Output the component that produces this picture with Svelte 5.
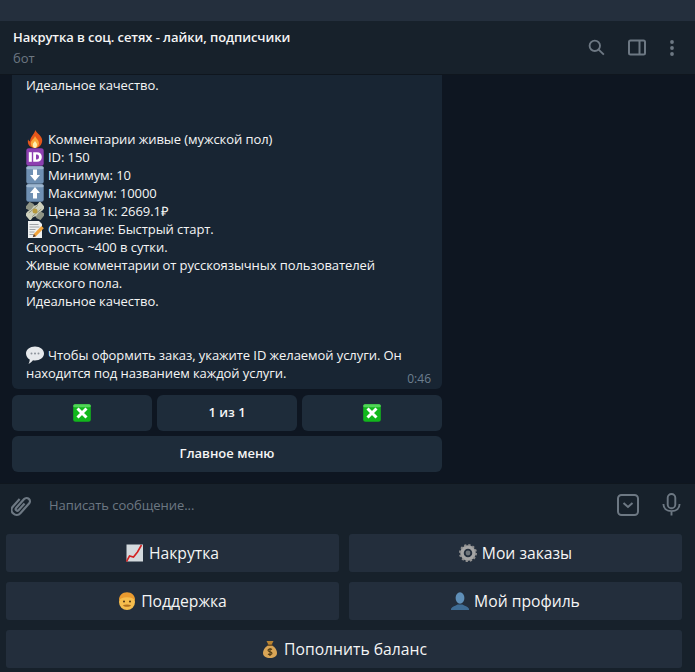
<script>
  const lines1 = [
    { e: 'fire', t: 'Комментарии живые (мужской пол)' },
    { e: 'id', t: 'ID: 150' },
    { e: 'down', t: 'Минимум: 10' },
    { e: 'up', t: 'Максимум: 10000' },
    { e: 'money', t: 'Цена за 1к: 2669.1₽' },
    { e: 'memo', t: 'Описание: Быстрый старт.' },
    { t: 'Скорость ~400 в сутки.' },
    { t: 'Живые комментарии от русскоязычных пользователей' },
    { t: 'мужского пола.' },
    { t: 'Идеальное качество.' }
  ];
  const keys = [
    { e: 'chart', t: 'Накрутка' },
    { e: 'gear', t: 'Мои заказы' },
    { e: 'man', t: 'Поддержка' },
    { e: 'user', t: 'Мой профиль' },
    { e: 'bag', t: 'Пополнить баланс', wide: true }
  ];
</script>

{#snippet emoji(n)}
  <svg class="emoji" viewBox="0 0 18 18" aria-hidden="true">
    {#if n === 'fire'}
      <path d="M9.500 0c.6 3 5.300 4.800 6.500 9 1 3.800-1.800 9-7 9S1 14 2 9.500c.5 1 1.200 1.700 2.200 2C3.800 7.500 8 4.500 9.500 0z" fill="#e4561b"/>
      <path d="M9 6c.8 2.300 4 3.800 4 7.300 0 2.600-1.800 4.700-4 4.700s-4.200-2-4.200-4.500C4.800 10.300 8.300 8.800 9 6z" fill="#fba93a"/>
      <path d="M9 11c.5 1.200 2 2 2 3.700 0 1.800-.9 3.300-2 3.300s-2.200-1.500-2.200-3.300C6.800 13 8.500 12.200 9 11z" fill="#fff0b0"/>
    {:else if n === 'id'}
      <rect x=".3" y=".3" width="17.400" height="17.400" rx="2.500" fill="#8d3fb0"/>
      <rect x="2.800" y="4.200" width="3" height="9.600" fill="#fff"/>
      <path d="M7.200 4.200h3.800c3 0 4.800 1.900 4.800 4.800s-1.800 4.800-4.800 4.800H7.200zm2.800 2.400v4.800h1c1.300 0 2-.9 2-2.400s-.7-2.400-2-2.400z" fill="#fff"/>
    {:else if n === 'down'}
      <rect x=".3" y=".3" width="17.400" height="17.400" rx="2.500" fill="#6f90b3"/>
      <rect x=".3" y=".3" width="17.400" height="3" rx="1.500" fill="#9db6cf"/>
      <path d="M7 3.500h4v5.500h3l-5 6-5-6h3z" fill="#fff"/>
    {:else if n === 'up'}
      <rect x=".3" y=".3" width="17.400" height="17.400" rx="2.500" fill="#6f90b3"/>
      <rect x=".3" y=".3" width="17.400" height="3" rx="1.500" fill="#9db6cf"/>
      <path d="M7 14.500h4V9h3L9 3 4 9h3z" fill="#fff"/>
    {:else if n === 'money'}
      <g transform="rotate(40 9 9)">
        <path d="M-1 5.500l4-1 4 1 4-1 4 1 4-1v8l-4 1-4-1-4 1-4-1-4 1z" fill="#8f9484"/>
      </g>
      <g transform="rotate(-40 9 9)">
        <path d="M-1 5.500l4-1 4 1 4-1 4 1 4-1v8l-4 1-4-1-4 1-4-1-4 1z" fill="#cdd0bd"/>
        <path d="M3 6.500h12M3 11.500h12" stroke="#8b8f78" stroke-width=".8"/>
      </g>
      <circle cx="9" cy="9" r="2.500" fill="#b79a3d"/>
    {:else if n === 'memo'}
      <path d="M2 1h11l3 3v14H2z" fill="#eef0f0"/>
      <path d="M3.500 4.500h9M3.500 7h10M3.500 9.500h6M3.500 12h5M3.500 14.500h4" stroke="#8b9196" stroke-width=".8"/>
      <path d="M15.500 6l2.300 2.200-7.800 8-3.200 1 1-3.300z" fill="#f2a33a"/>
      <path d="M6.800 17.200l1-3.300 2.200 2.300z" fill="#5d4037"/>
    {:else if n === 'speech'}
      <path d="M9 .5c5 0 9 2.900 9 7s-4 7-9 7c-.7 0-1.400 0-2-.2-1 1.500-2.700 2.900-4.600 3.500.8-1 1.300-2.600 1.300-4.300C1.500 12.300 0 10.100 0 7.500 0 3.400 4 .5 9 .5z" fill="#e6e9ec"/>
      <circle cx="5.500" cy="7.500" r="1" fill="#8b9299"/>
      <circle cx="9" cy="7.500" r="1" fill="#8b9299"/>
      <circle cx="12.500" cy="7.500" r="1" fill="#8b9299"/>
    {:else if n === 'x'}
      <rect x=".2" y=".2" width="17.600" height="17.600" rx="2.500" fill="#12b71c"/>
      <rect x=".2" y=".2" width="17.600" height="3" rx="1.500" fill="#52d458"/>
      <path d="M4.500 4.500l9 9M13.500 4.500l-9 9" stroke="#fff" stroke-width="3"/>
    {:else if n === 'chart'}
      <rect x=".5" y=".5" width="16.500" height="17" fill="#d4dade"/>
      <path d="M.5 17.500l3-5.500 4 1 4-5L15.500 1" fill="none" stroke="#d22222" stroke-width="1.600"/>
    {:else if n === 'gear'}
      <circle cx="9" cy="9" r="6" fill="none" stroke="#a5a5a5" stroke-width="3.500"/>
      <circle cx="9" cy="9" r="8" fill="none" stroke="#919191" stroke-width="2" stroke-dasharray="2.200 2"/>
      <circle cx="9" cy="9" r="2.400" fill="#6f767c"/>
    {:else if n === 'man'}
      <ellipse cx="9" cy="10" rx="8" ry="8" fill="#f6bd4d"/>
      <path d="M1 9C.5 3 4.500.2 9 .2S17.500 3 17 9c-1-2.500-3.500-3.700-8-3.700S2 6.500 1 9z" fill="#e99a2f"/>
      <circle cx="6" cy="9.500" r="1" fill="#4a3015"/>
      <circle cx="12" cy="9.500" r="1" fill="#4a3015"/>
      <path d="M5 13.200c2.300-1 5.700-1 8 0-1 2-7 2-8 0z" fill="#b0701f"/>
    {:else if n === 'user'}
      <ellipse cx="9" cy="6" rx="4.400" ry="5.800" fill="#5f8fb8"/>
      <path d="M-.5 18c.5-3 4.500-4 7-5.500h5c2.500 1.500 6.500 2.500 7 5.500z" fill="#3f6c94"/>
    {:else if n === 'bag'}
      <path d="M5.500 1l7 0-2 4h-3z" fill="#b98331"/>
      <path d="M7 5.500h4c3.500 1.500 5 5 5 7.500 0 3.200-3 5-7 5s-7-1.800-7-5c0-2.500 1.500-6 5-7.500z" fill="#d9a556"/>
      <rect x="6.500" y="4.500" width="5" height="1.300" fill="#77501c"/>
      <path d="M11 9.500c-1-.9-4-.9-4 .8 0 1.900 4 1 4 2.900 0 1.700-3 1.700-4 .8M9 8v8" fill="none" stroke="#4f3a14" stroke-width="1.100"/>
    {/if}
  </svg>
{/snippet}

{#snippet line(l)}
  <div class="line">
    {#if l.e}{@render emoji(l.e)}{/if}<span>{l.t}</span>
  </div>
{/snippet}

<div class="app">
  <div class="topbar"></div>

  <header class="head">
    <div class="titles">
      <div class="title">Накрутка в соц. сетях - лайки, подписчики</div>
      <div class="sub">бот</div>
    </div>
    <div class="head-icons">
      <svg class="i-search" viewBox="0 0 18 18" aria-hidden="true">
        <circle cx="7.200" cy="7.200" r="5.500" />
        <path d="M11.300 11.300l5.500 5.300" />
      </svg>
      <svg class="i-panel" viewBox="0 0 18 18" aria-hidden="true">
        <rect x="1" y="1.500" width="16" height="14" rx="1.500" />
        <path d="M11.500 1.500v14" />
      </svg>
      <svg class="i-more" viewBox="0 0 4 16" aria-hidden="true">
        <circle cx="2" cy="2" r="1.900" />
        <circle cx="2" cy="8" r="1.900" />
        <circle cx="2" cy="14" r="1.900" />
      </svg>
    </div>
  </header>

  <main class="chat">
    <article class="bubble">
      <div class="line">Идеальное качество.</div>
      <div class="blank"></div>
      {#each lines1 as l}
        {@render line(l)}
      {/each}
      <div class="blank"></div>
      <div class="line">{@render emoji('speech')}<span>Чтобы оформить заказ, укажите ID желаемой услуги. Он</span></div>
      <div class="line">находится под названием каждой услуги.</div>
      <time class="time">0:46</time>
    </article>
    <div class="inline-row">
      <button class="ibtn">{@render emoji('x')}</button>
      <button class="ibtn"><span>1 из 1</span></button>
      <button class="ibtn">{@render emoji('x')}</button>
    </div>
    <div class="inline-row">
      <button class="ibtn"><span>Главное меню</span></button>
    </div>
  </main>

  <section class="composer">
    <svg class="i-clip" viewBox="0 0 20 22" aria-hidden="true">
      <g transform="rotate(42 10 11)">
        <path d="M5 7.500v10a5 5 0 0 0 10 0V4.500a3.300 3.300 0 0 0-6.600 0v12a1.600 1.600 0 0 0 3.200 0V7.500"/>
      </g>
    </svg>
    <div class="placeholder">Написать сообщение...</div>
    <svg class="i-cmd" viewBox="0 0 22 22" aria-hidden="true">
      <rect x="1" y="1" width="20" height="20" rx="3.500" />
      <path d="M6.500 9l4.500 4 4.500-4" />
    </svg>
    <svg class="i-mic" viewBox="0 0 20 24" aria-hidden="true">
      <rect x="6" y="1" width="8" height="15" rx="4" />
      <path d="M1.500 11.500c0 4.600 3.600 7.500 8.500 7.500s8.500-2.900 8.500-7.500M10 19v4.500" />
    </svg>
  </section>

  <nav class="keyboard">
    {#each keys as k}
      <button class="kbtn" class:wide={k.wide}>{@render emoji(k.e)}<span>{k.t}</span></button>
    {/each}
  </nav>
</div>

<style>
  :global(body) {
    margin: 0;
    background: #0e1621;
  }
  .app {
    width: 695px;
    height: 672px;
    display: flex;
    flex-direction: column;
    overflow: hidden;
    background: #0e1621;
    font-family: "Open Sans", sans-serif;
    font-size: 13px;
    color: #f5f5f5;
  }
  .topbar {
    height: 21px;
    flex: none;
    background: #242f3d;
  }
  .head {
    height: 54px;
    flex: none;
    display: flex;
    align-items: center;
    justify-content: space-between;
    padding: 0 21px 0 13px;
    box-sizing: border-box;
    background: #17212b;
    border-bottom: 1px solid #0f161e;
  }
  .title {
    font-weight: 600;
    line-height: 18px;
    letter-spacing: -0.075px;
    color: #f5f5f5;
  }
  .sub {
    margin-top: 3px;
    line-height: 18px;
    color: #6d7883;
  }
  .head-icons {
    display: flex;
    align-items: center;
    gap: 23px;
  }
  .head-icons svg,
  .composer svg {
    fill: none;
    stroke: #6d7883;
    stroke-width: 2;
    display: block;
  }
  .i-search { width: 17px; height: 17px; }
  .i-panel { width: 18px; height: 18px; }
  .head-icons .i-more {
    width: 4px;
    height: 16px;
    margin-left: 1px;
    fill: #6d7883;
    stroke: none;
  }
  .chat {
    height: 408px;
    flex: none;
    box-sizing: border-box;
    padding: 0 253px 0 12px;
    display: flex;
    flex-direction: column;
    gap: 5px;
    overflow: hidden;
  }
  .bubble {
    position: relative;
    flex: none;
    height: 314px;
    box-sizing: border-box;
    padding: 1px 14px 0;
    background: #182533;
    border-radius: 0 0 6px 6px;
    margin-bottom: 1px;
    letter-spacing: -0.07px;
  }
  .line {
    display: flex;
    align-items: center;
    height: 18px;
    line-height: 18px;
    white-space: nowrap;
  }
  .blank { height: 36px; }
  .emoji {
    width: 18px;
    height: 18px;
    flex: none;
    display: block;
  }
  .line .emoji { margin-right: 4px; }
  .time {
    position: absolute;
    right: 11px;
    bottom: 2px;
    font-size: 12px;
    line-height: 16px;
    letter-spacing: 0;
    color: #6d7f8f;
  }
  .inline-row {
    display: flex;
    gap: 5px;
    flex: none;
  }
  button {
    font-family: inherit;
    border: 0;
    padding: 0;
    display: flex;
    align-items: center;
    justify-content: center;
  }
  .ibtn {
    flex: 1;
    height: 36px;
    border-radius: 6px;
    background: #1e2c3a;
    color: #f5f5f5;
    font-size: 13px;
    font-weight: 600;
  }
  .ibtn span {
    margin-bottom: 2px;
  }
  .composer {
    height: 44px;
    flex: none;
    display: flex;
    align-items: center;
    box-sizing: border-box;
    padding: 0 14px 2px 11px;
    background: #17212b;
    border-top: 1px solid #0f161e;
  }
  .composer svg.i-clip { width: 20px; height: 22px; stroke-width: 2.200; }
  .placeholder {
    flex: 1;
    margin-left: 18px;
    color: #6d7883;
    letter-spacing: -0.05px;
  }
  .i-cmd { width: 22px; height: 22px; margin-right: 23px; }
  .i-mic { width: 19px; height: 23px; }
  .keyboard {
    flex: 1;
    display: grid;
    grid-template-columns: 333px 333px;
    grid-auto-rows: 38px;
    gap: 10px;
    padding: 7px 13px 0 6px;
    background: #17212b;
  }
  .kbtn {
    gap: 5px;
    background: #232e3c;
    border-radius: 3px;
    color: #f5f5f5;
    font-size: 15.7px;
    font-weight: 400;
  }
  .kbtn.wide { grid-column: 1 / 3; }
</style>
